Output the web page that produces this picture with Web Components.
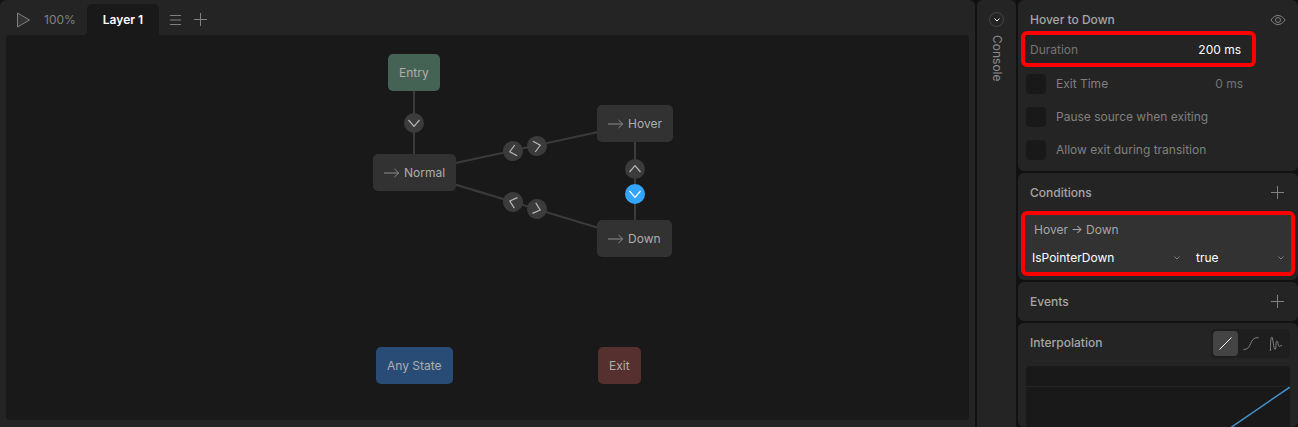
<!DOCTYPE html>
<html lang="en">
<head>
<meta charset="utf-8">
<title>State machine editor</title>
<style>
  body {
    margin: 0;
    height: 100vh;
    overflow: hidden;
    background: #111;
    color: #a6a6a6;
    font: 12px/16px Inter, sans-serif;
  }
</style>
</head>
<body>
<editor-shell>
  <graph-panel slot="main" zoom="100%" layer="Layer 1">
    <state-graph>
      <graph-node x="382" y="19" kind="entry">Entry</graph-node>
      <graph-node x="367" y="119" kind="state">Normal</graph-node>
      <graph-node x="591" y="70" kind="state">Hover</graph-node>
      <graph-node x="591" y="185" kind="state">Down</graph-node>
      <graph-node x="370" y="312" kind="any">Any State</graph-node>
      <graph-node x="592" y="312" kind="exit">Exit</graph-node>
    </state-graph>
  </graph-panel>
  <console-rail slot="rail">Console</console-rail>
  <side-inspector slot="side">
    <inspector-panel heading="Hover to Down" action="eye">
      <value-row value="200 ms" active marked>Duration</value-row>
      <check-row value="0 ms">Exit Time</check-row>
      <check-row>Pause source when exiting</check-row>
      <check-row>Allow exit during transition</check-row>
    </inspector-panel>
    <inspector-panel heading="Conditions" action="plus">
      <condition-card input="IsPointerDown" value="true">Hover → Down</condition-card>
    </inspector-panel>
    <inspector-panel heading="Events" action="plus"></inspector-panel>
    <inspector-panel heading="Interpolation">
      <curve-picker slot="action"></curve-picker>
      <curve-chart></curve-chart>
    </inspector-panel>
  </side-inspector>
</editor-shell>

<script>
const ICONS = {
  play: '<svg width="16" height="18" viewBox="0 0 16 18"><path fill="#333" d="M1.500 2v14L13.500 9z"/></svg>',
  menu: '<svg width="12" height="14" viewBox="0 0 12 14"><path d="M0 2.500h11M0 7h11M0 11.500h11"/></svg>',
  plus: '<svg width="13" height="13" viewBox="0 0 13 13"><path d="M6.500 0v13M0 6.500h13"/></svg>',
  eye: '<svg width="16" height="12" viewBox="0 0 16 12"><path d="M1 6C3 3 5.300 1.500 8 1.500S13 3 15 6C13 9 10.700 10.500 8 10.500S3 9 1 6z"/><circle cx="8" cy="6" r="2.500"/></svg>',
  chevron: '<svg width="6" height="4" viewBox="0 0 6 4"><path d="M.5.5 3 3 5.500.5"/></svg>',
  arrow: '<svg width="16" height="10" viewBox="0 0 16 10"><path d="M0 5h14.500M10.500 1l4.200 4-4.200 4"/></svg>',
  linear: '<svg width="15" height="15" viewBox="0 0 15 15"><path d="M1.500 13.500l12-12"/></svg>',
  cubic: '<svg width="16" height="15" viewBox="0 0 16 15"><path d="M.5 13.500C10 13.500 5 1.500 15.500 1.500"/></svg>',
  elastic: '<svg width="14" height="16" viewBox="0 0 14 16"><path d="M1.500 15C1.500 9 1.500 1 2.800 1S4.500 13.500 6 13.500 6.500 5 7.800 5s1.200 5.500 2.400 5.500S11 9.500 13 9.500"/></svg>'
};

const BASE = `
  * { box-sizing: border-box; }
  svg { display: block; fill: none; stroke: currentColor; }
  button, input, select { margin: 0; padding: 0; border: 0; background: none; color: inherit; font: inherit; outline: 0; }
`;

// Small base class: subclasses return their markup and styles
class UiElement extends HTMLElement {
  constructor() {
    super();
    this.attachShadow({ mode: 'open' });
  }

  connectedCallback() {
    this.shadowRoot.innerHTML = `<style>${BASE}${this.styles()}</style>${this.render()}`;
  }

  attr(name) {
    return this.getAttribute(name) || '';
  }

  styles() { return ''; }
  render() { return '<slot></slot>'; }
}

// ── Shell ─────────────────────────────────────────────────

customElements.define('editor-shell', class extends UiElement {
  styles() {
    return `
      :host { display: grid; grid-template: minmax(0, 1fr) / minmax(0, 1fr) 39px 280px; gap: 2px; height: 100%; }
      ::slotted(*) { min-height: 0; box-sizing: border-box; }
    `;
  }

  render() {
    return '<slot name="main"></slot><slot name="rail"></slot><slot name="side"></slot>';
  }
});

customElements.define('graph-panel', class extends UiElement {
  styles() {
    return `
      :host { display: flex; flex-direction: column; padding: 0 6px 7px; background: #242424; border-radius: 6px 6px 0 0; }
      .bar { display: flex; align-items: center; height: 35px; padding: 4px 10px 0; color: #808080; }
      .bar button { display: flex; align-items: center; height: 31px; }
      .zoom { margin: 0 11px 0 12px; }
      .tab { position: relative; padding: 0 16px; margin-right: 11px; background: #191919; border-radius: 5px 5px 0 0; color: #fff; font-weight: 600; }
      /* inner curve where the tab meets the canvas */
      .tab::before { content: ""; position: absolute; right: 100%; bottom: 0; width: 4px; height: 4px; background: radial-gradient(circle at 0 0, transparent 4px, #191919 4px); }
      .menu { margin-right: 12px; }
      ::slotted(*) { flex: 1; }
    `;
  }

  render() {
    return `
      <div class="bar">
        <button aria-label="Play">${ICONS.play}</button>
        <button class="zoom">${this.attr('zoom')}</button>
        <button class="tab">${this.attr('layer')}</button>
        <button class="menu" aria-label="Layers">${ICONS.menu}</button>
        <button aria-label="Add layer">${ICONS.plus}</button>
      </div>
      <slot></slot>
    `;
  }
});

// ── Graph ─────────────────────────────────────────────────

const EDGES = [
  [408, 38, 408, 138],
  [408, 137, 629, 89],
  [408, 137, 629, 204],
  [629, 89, 629, 204]
];

// x, y, direction in degrees (0 points right)
const TRANSITIONS = [
  [408, 88, 90],
  [507, 116, 168],
  [531, 111, -12],
  [507, 167, 197],
  [531, 174, 17],
  [629, 134, -90],
  [629, 159, 90, 'selected']
];

customElements.define('state-graph', class extends UiElement {
  styles() {
    return `
      :host { display: block; position: relative; overflow: hidden; background: #191919; border-radius: 4px; }
      .edges { position: absolute; inset: 0; width: 100%; height: 100%; }
      line { stroke: #3b3b3b; stroke-width: 2; }
      circle { fill: #3b3b3b; stroke: none; }
      .selected circle { fill: #33a5ff; }
      path { stroke: #b8b8b8; stroke-width: 1.200; }
      .selected path { stroke: #fff; }
    `;
  }

  render() {
    const lines = EDGES.map(([a, b, c, d]) => `<line x1="${a}" y1="${b}" x2="${c}" y2="${d}"/>`).join('');
    const marks = TRANSITIONS.map(([x, y, deg, cls]) => `
      <g class="${cls || ''}" transform="translate(${x} ${y}) rotate(${deg})">
        <circle r="10"/><path d="M-3-5.500 3.300 0-3 5.500"/>
      </g>`).join('');
    return `<svg class="edges">${lines}${marks}</svg><slot></slot>`;
  }
});

customElements.define('graph-node', class extends UiElement {
  styles() {
    return `
      :host { position: absolute; left: ${this.attr('x')}px; top: ${this.attr('y')}px; display: flex; align-items: center; gap: 4px; height: 37px; padding: 0 11px; border-radius: 5px; background: #323232; color: #adadad; white-space: nowrap; }
      :host([kind="entry"]) { background: #456355; }
      :host([kind="any"]) { background: #294c77; }
      :host([kind="exit"]) { background: #562f2f; }
      svg { color: #8c8c8c; }
    `;
  }

  render() {
    return `${this.attr('kind') === 'state' ? ICONS.arrow : ''}<slot></slot>`;
  }
});

// ── Console rail ──────────────────────────────────────────

customElements.define('console-rail', class extends UiElement {
  styles() {
    return `
      :host { display: flex; flex-direction: column; align-items: center; gap: 8px; padding-top: 12px; background: #242424; border-radius: 6px 6px 0 0; color: #8c8c8c; }
      button { display: grid; place-items: center; width: 15px; height: 15px; border: 1px solid #484848; border-radius: 50%; color: #fff; }
      span { writing-mode: vertical-rl; }
    `;
  }

  render() {
    return `<button aria-label="Expand console">${ICONS.chevron}</button><span><slot></slot></span>`;
  }
});

// ── Inspector ─────────────────────────────────────────────

customElements.define('side-inspector', class extends UiElement {
  styles() {
    return `
      :host { display: flex; flex-direction: column; gap: 2px; }
      ::slotted(*) { flex: none; }
      ::slotted(:last-child) { flex: 1; min-height: 0; }
    `;
  }
});

customElements.define('inspector-panel', class extends UiElement {
  styles() {
    return `
      :host { display: flex; flex-direction: column; background: #242424; border-radius: 6px; }
      header { display: flex; flex: none; align-items: center; justify-content: space-between; height: 39px; padding: 0 8px 0 12px; }
      h2 { margin: 0; font: inherit; font-weight: 500; }
      button { display: grid; place-items: center; width: 25px; height: 25px; color: #808080; }
    `;
  }

  render() {
    const icon = ICONS[this.attr('action')];
    return `
      <header>
        <h2>${this.attr('heading')}</h2>
        <slot name="action">${icon ? `<button aria-label="${this.attr('heading')}">${icon}</button>` : ''}</slot>
      </header>
      <slot></slot>
    `;
  }
});

// Outline drawn over a highlighted control
const MARK = 'content: ""; position: absolute; border: 4px solid #f00; border-radius: 6px; pointer-events: none;';

customElements.define('value-row', class extends UiElement {
  styles() {
    return `
      :host { display: flex; align-items: center; position: relative; height: 22px; padding: 0 57px 0 12px; color: #757575; }
      label { flex: 1; }
      input { width: 80px; text-align: right; }
      :host([active]) input { color: #fff; }
      :host([marked])::after { ${MARK} inset: -8px 42px -6px 3px; }
    `;
  }

  render() {
    return `<label for="v"><slot></slot></label><input id="v" value="${this.attr('value')}">`;
  }
});

customElements.define('check-row', class extends UiElement {
  styles() {
    return `
      :host { display: flex; align-items: center; height: 33px; padding: 0 55px 0 8px; color: #808080; }
      :host(:first-of-type) { margin-top: 6px; }
      :host(:last-child) { margin-bottom: 5px; }
      .box { appearance: none; width: 20px; height: 20px; margin-right: 10px; border-radius: 4px; background: #191919; }
      label { flex: 1; }
      .value { width: 60px; text-align: right; color: #757575; }
    `;
  }

  render() {
    const value = this.attr('value');
    return `
      <input class="box" id="c" type="checkbox"><label for="c"><slot></slot></label>
      ${value ? `<input class="value" aria-label="Value" value="${value}">` : ''}
    `;
  }
});

customElements.define('condition-card', class extends UiElement {
  styles() {
    return `
      :host { display: block; position: relative; margin: 3px 5px 6px; padding-top: 3px; background: #323232; border-radius: 5px; }
      :host::after, :host(:not([plain]))::after { ${MARK} inset: -4px -2px -2px; }
      .title { display: block; padding: 4px 11px; }
      .fields { display: grid; grid-template-columns: 148px 1fr; gap: 16px; padding: 0 9px; color: #fff; }
      .pick { display: grid; grid-template-columns: 1fr auto; align-items: center; height: 32px; }
      .pick > * { grid-row: 1; }
      select { appearance: none; grid-column: 1 / 3; height: 24px; }
      svg { grid-column: 2; color: #808080; pointer-events: none; }
    `;
  }

  render() {
    const pick = (label, value) => `
      <span class="pick"><select aria-label="${label}"><option>${value}</option></select>${ICONS.chevron}</span>`;
    return `
      <span class="title"><slot></slot></span>
      <div class="fields">${pick('Input', this.attr('input'))}${pick('Value', this.attr('value'))}</div>
    `;
  }
});

customElements.define('curve-picker', class extends UiElement {
  styles() {
    return `
      :host { display: flex; padding: 2px; margin-top: 2px; border-radius: 5px; background: #1e1e1e; color: #808080; }
      button { display: grid; place-items: center; width: 25px; height: 25px; border-radius: 4px; }
      .on { background: #444; color: #fff; }
    `;
  }

  render() {
    return ['linear', 'cubic', 'elastic'].map((name, i) =>
      `<button class="${i ? '' : 'on'}" aria-label="${name}">${ICONS[name]}</button>`).join('');
  }
});

customElements.define('curve-chart', class extends UiElement {
  styles() {
    return `
      :host { display: flex; flex: 1; min-height: 0; margin: 4px 8px 0; padding-top: 20px; border-radius: 4px 4px 0 0; background: #191919; }
      svg { width: 100%; height: auto; border-top: 1px solid #242424; }
      path { stroke: #4593ce; stroke-width: 1.500; }
    `;
  }

  // Anchored at the top right, so a short panel still shows the end of the curve
  render() {
    return '<svg viewBox="0 0 264 181" preserveAspectRatio="xMaxYMin slice"><path d="M0 181 264 0"/></svg>';
  }
});
</script>
</body>
</html>
